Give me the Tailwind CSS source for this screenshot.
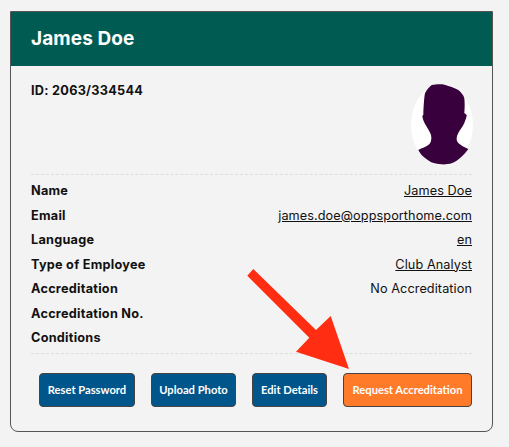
<!DOCTYPE html>
<html lang="en">
<head>
  <meta charset="UTF-8" />
  <title>James Doe</title>
  <script src="https://cdn.jsdelivr.net/npm/@tailwindcss/browser@4"></script>
</head>
<body class="bg-[#f3f3f3] text-[#111] font-['Inter',sans-serif] w-[509px] h-[447px] overflow-hidden">

  <div class="relative w-[509px] h-[447px] pt-[11px] pl-[10px]">
    <!-- Card -->
    <section class="w-[483px] h-[421px] border border-[#555] rounded-b-[8px] overflow-hidden">
      <div class="h-[54px] bg-[#005c53] pl-[20px] pt-[1px] flex items-center text-white text-[19px] font-bold tracking-[0.1px]">James Doe</div>

      <div class="px-[20px]">
        <div class="flex justify-between h-[109px] border-b border-dashed border-[#ddd]">
          <div class="pt-[16px] text-[12.7px] leading-[18px] font-bold tracking-[0.27px]">ID: 2063/334544</div>
          <svg class="mt-[18px] mr-[-2px] w-[63px] h-[82px]" viewBox="0 0 63 82">
            <ellipse cx="31" cy="41" rx="31" ry="40.5" fill="#fff"/>
            <path d="M29 0.3 C26 0.4 23 0.6 20.7 1 C18 3 15.5 6 14 9.3 C13 14 12.5 24 12.3 31 L11.3 32 C12 36 13 38.5 14.7 41 C16.5 44 19 48 20 51 C20.5 53 20.5 55 20 57 C19.5 59 18.5 60 17.3 61 C14.5 63 10 64.5 7.3 66 C9 69 11 72 14 74 C18 77.5 22 79.5 27.3 80 C32 80.7 37 80.5 40.7 79.3 C47 77 53 71 57.3 65 C54 63.5 50 61.5 47.3 59 C46 57.5 45.5 56 45.7 54 C46 52 46.5 50.5 47.3 49 C49 45.5 52 42.5 53.3 39 C54.5 36 55.5 33.5 55.7 31 L53.3 29 C53.8 24 53.8 18 53.3 14 C52.5 11 50 8 47.3 6 C44 4 41 3 37.3 2 C34.5 0.8 31.5 0.2 29 0.3 Z" fill="#38003c"/>
          </svg>
        </div>

        <dl class="pt-[4px] h-[179px] text-[12.7px] leading-[24.5px] tracking-[0.08px] border-b border-dashed border-[#ddd]">
          <div class="flex justify-between"><dt class="font-bold tracking-[0.25px]">Name</dt><dd class="underline">James Doe</dd></div>
          <div class="flex justify-between"><dt class="font-bold tracking-[0.25px]">Email</dt><dd class="underline">james.doe@oppsporthome.com</dd></div>
          <div class="flex justify-between"><dt class="font-bold tracking-[0.25px]">Language</dt><dd class="underline">en</dd></div>
          <div class="flex justify-between"><dt class="font-bold tracking-[0.25px]">Type of Employee</dt><dd class="underline">Club Analyst</dd></div>
          <div class="flex justify-between"><dt class="font-bold tracking-[0.25px]">Accreditation</dt><dd>No Accreditation</dd></div>
          <div class="flex justify-between"><dt class="font-bold tracking-[0.25px]">Accreditation No.</dt><dd></dd></div>
          <div class="flex justify-between"><dt class="font-bold tracking-[0.25px]">Conditions</dt><dd></dd></div>
        </dl>

        <div class="flex gap-[16px] pl-[8px] pt-[19px] font-['Lato',sans-serif] text-[11.2px] font-bold text-white">
          <button class="w-[96px] h-[34px] bg-[#00558a] border border-[#444] rounded-[4px]">Reset Password</button>
          <button class="w-[85px] h-[34px] bg-[#00558a] border border-[#444] rounded-[4px]">Upload Photo</button>
          <button class="w-[75px] h-[34px] bg-[#00558a] border border-[#444] rounded-[4px]">Edit Details</button>
          <button class="w-[129px] h-[34px] bg-[#ff7a29] border border-[#444] rounded-[4px]">Request Accreditation</button>
        </div>
      </div>
    </section>

    <!-- Arrow over the card -->
    <svg class="absolute left-0 top-0 pointer-events-none" width="509" height="447" viewBox="0 0 509 447">
      <polygon points="247.3,275.7 253.3,269 316,330 330.7,316 349,369 296,351.7 309.3,337.7" fill="#ff2d12"/>
    </svg>
  </div>

</body>
</html>
